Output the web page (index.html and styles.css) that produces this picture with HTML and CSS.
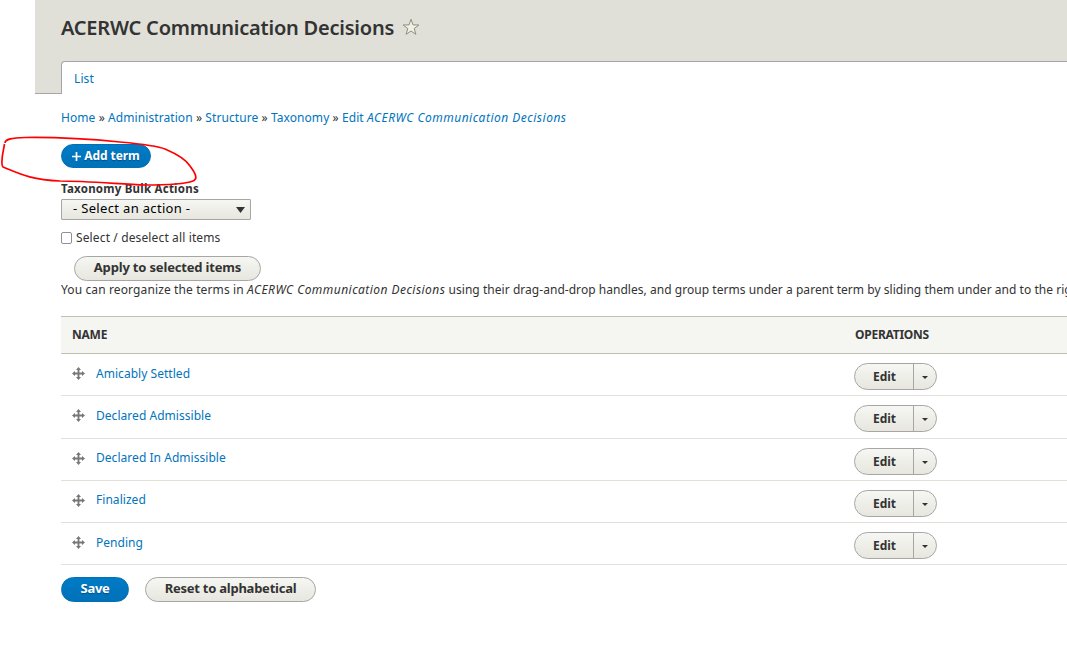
FILE: index.html
```
<!DOCTYPE html>
<html lang="en">
<head>
<meta charset="utf-8">
<title>ACERWC Communication Decisions</title>
<link rel="stylesheet" href="styles.css">
</head>
<body>
<svg class="defs" width="0" height="0" aria-hidden="true">
  <symbol id="move" viewBox="0 0 13 13"><path d="M6.500 0 9 3H7.400v2.600H10V4l3 2.500L10 9V7.400H7.400V10H9l-2.500 3L4 10h1.600V7.400H3V9L0 6.500 3 4v1.600h2.600V3H4z" fill="#777"/></symbol>
</svg>
<header class="header">
  <h1 class="title"><span class="t-title">ACERWC Communication Decisions</span>
    <svg class="star" width="18" height="18" viewBox="0 0 18 18"><path d="M9 1.300 11 6.900l5.900.1-4.700 3.600 1.700 5.700L9 13l-4.900 3.300 1.700-5.700L1.100 7 7 6.900z" fill="#f0f0e8" stroke="#8f8f7c" stroke-width="1"/></svg>
  </h1>
  <nav class="tabs"><a class="tab">List</a></nav>
</header>
<main class="content">
  <nav class="breadcrumb"><a>Home</a> » <a>Administration</a> » <a>Structure</a> » <a>Taxonomy</a> » <a>Edit <em>ACERWC Communication Decisions</em></a></nav>
  <a class="btn primary add"><svg width="9" height="9" viewBox="0 0 9 9"><path d="M4.500 0v9M0 4.500h9" stroke="#fff" stroke-width="1.700"/></svg><span class="t-add">Add term</span></a>
  <div class="label"><span class="t-label">Taxonomy Bulk Actions</span></div>
  <div class="select"><span class="t-select">- Select an action -</span><svg width="9" height="6" viewBox="0 0 9 6"><path d="M0 0h9L4.500 6z" fill="#333"/></svg></div>
  <label class="check"><span class="box"></span><span class="t-check">Select / deselect all items</span></label>
  <a class="btn apply"><span class="t-apply">Apply to selected items</span></a>
  <p class="help"><span class="lead">You can reorganize the terms in </span><em>ACERWC Communication Decisions</em> using their drag-and-drop handles, and group terms under a parent term by sliding them under and to the right</p>
  <div class="table">
    <div class="row head"><span class="t-name">NAME</span><span class="t-ops">OPERATIONS</span></div>
    <div class="row"><svg class="move"><use href="#move"/></svg><a class="term">Amicably Settled</a><div class="drop"><b>Edit</b><i></i></div></div>
    <div class="row"><svg class="move"><use href="#move"/></svg><a class="term">Declared Admissible</a><div class="drop"><b>Edit</b><i></i></div></div>
    <div class="row"><svg class="move"><use href="#move"/></svg><a class="term">Declared In Admissible</a><div class="drop"><b>Edit</b><i></i></div></div>
    <div class="row"><svg class="move"><use href="#move"/></svg><a class="term">Finalized</a><div class="drop"><b>Edit</b><i></i></div></div>
    <div class="row"><svg class="move"><use href="#move"/></svg><a class="term">Pending</a><div class="drop"><b>Edit</b><i></i></div></div>
  </div>
  <div class="actions"><a class="btn primary save"><span class="t-save">Save</span></a><a class="btn reset"><span class="t-reset">Reset to alphabetical</span></a></div>
</main>
<svg class="mark" width="200" height="54" viewBox="0 0 200 54"><path d="M5 10C5 6 12 5 25 4.500 60 4 90 6 120 9c22 2 38 4 45 7 14 6 22 12 25 17 6 8 8 13 3 15-8 3-30 4-48 4-25-1-60-4-85-4-28-1-40-7-57-14C1 32 2 27 2.500 22L4.500 11" fill="none" stroke="#f00" stroke-width="1.700"/></svg>
</body>
</html>
```
FILE: styles.css
```
* { box-sizing: border-box; }
body { margin: 0; width: 1067px; height: 655px; overflow: hidden; position: relative; background: #fff; color: #333; font: 12px/18px "Noto Sans", sans-serif; white-space: nowrap; }
a { color: #0074bd; }
.defs { position: absolute; }
.header { margin-left: 35px; height: 94px; background: #e0e0d8; border-bottom: 1px solid #a6a6a6; padding-left: 26px; }
.title { margin: 0; height: 61px; padding-top: 14px; font-size: 20px; line-height: 28px; font-weight: 600; display: flex; gap: 8px; }
.star { margin-top: 4px; }
.t-title { letter-spacing: -.22px; }
.tabs { height: 33px; background: #fff; border: solid #a6a6a6; border-width: 1px 0 0 1px; border-top-left-radius: 4px; padding: 8px 12px; }
.tab { letter-spacing: .1px; }
.content { padding-left: 61px; display: flex; flex-direction: column; align-items: flex-start; }
.breadcrumb { margin-top: 15px; height: 18px; letter-spacing: .08px; }
.breadcrumb em { letter-spacing: .5px; }
.btn { display: flex; align-items: center; justify-content: center; border: 1px solid #a6a6a6; border-radius: 20px; background: linear-gradient(#f6f6f3, #e7e7df); color: #333; font-weight: 700; font-size: 13px; }
.primary { color: #fff; border-color: #0071b8; background: linear-gradient(#007bc6, #0071b8); text-shadow: 0 1px 1px #00508a; }
.add { margin-top: 17px; width: 90px; height: 24px; gap: 3px; font-size: 12px; }
.t-add { letter-spacing: -.08px; }
.label { margin-top: 12px; height: 18px; font-weight: 700; font-size: 11.500px; letter-spacing: .23px; }
.select { margin-top: 1px; width: 190px; height: 21px; border: 1px solid #a6a6a6; border-radius: 1px; background: linear-gradient(#f6f6f3, #e7e7df); display: flex; align-items: center; justify-content: space-between; padding: 0 5px 1px 11px; color: #000; font-size: 13px; letter-spacing: .33px; }
.select span { margin-top: -2px; }
.select svg { margin-top: 2px; }
.check { margin-top: 9px; height: 18px; display: flex; align-items: center; gap: 3px; letter-spacing: .13px; }
.box { width: 11px; height: 12px; border: 1px solid #8f8f9d; border-radius: 2px; margin-right: 1px; }
.apply { margin: 9px 0 0 13px; width: 187px; height: 25px; letter-spacing: -.17px; padding-bottom: 3px; }
.help { margin: 0; width: 1006px; overflow: hidden; height: 18px; letter-spacing: .04px; }
.lead { letter-spacing: .12px; }
.help em { letter-spacing: .46px; }
.table { width: 1006px; margin-top: 17px; }
.row { height: 42.250px; border-bottom: 1px solid #e0e0d8; padding-left: 11px; display: flex; align-items: flex-start; }
.head { height: 38px; background: #f5f5f2; border-top: 1px solid #bfbfb3; border-bottom-color: #bfbfb3; align-items: center; font-weight: 700; letter-spacing: -.25px; }
.move { width: 13px; height: 13px; margin: 13.200px 11px 0 0; }
.term { margin-top: 10.700px; width: 758px; letter-spacing: .04px; }
.t-name { width: 783px; }
.drop { margin-top: 9px; width: 83px; height: 27px; border: 1px solid #a6a6a6; border-radius: 14px; background: linear-gradient(#f6f6f3, #e7e7df); display: flex; }
.drop b { width: 59px; border-right: 1px solid #a6a6a6; padding-left: 1px; text-align: center; line-height: 25px; }
.drop i { margin: 12px 0 0 8px; border: solid transparent; border-width: 3px 3px 0; border-top-color: #333; height: 0; }
.actions { margin-top: 12px; display: flex; gap: 16px; }
.save { width: 68px; height: 25px; letter-spacing: -.3px; padding-bottom: 3px; }
.reset { width: 171px; height: 25px; letter-spacing: -.24px; padding-bottom: 3px; }
.mark { position: absolute; left: 0; top: 133px; }
```
